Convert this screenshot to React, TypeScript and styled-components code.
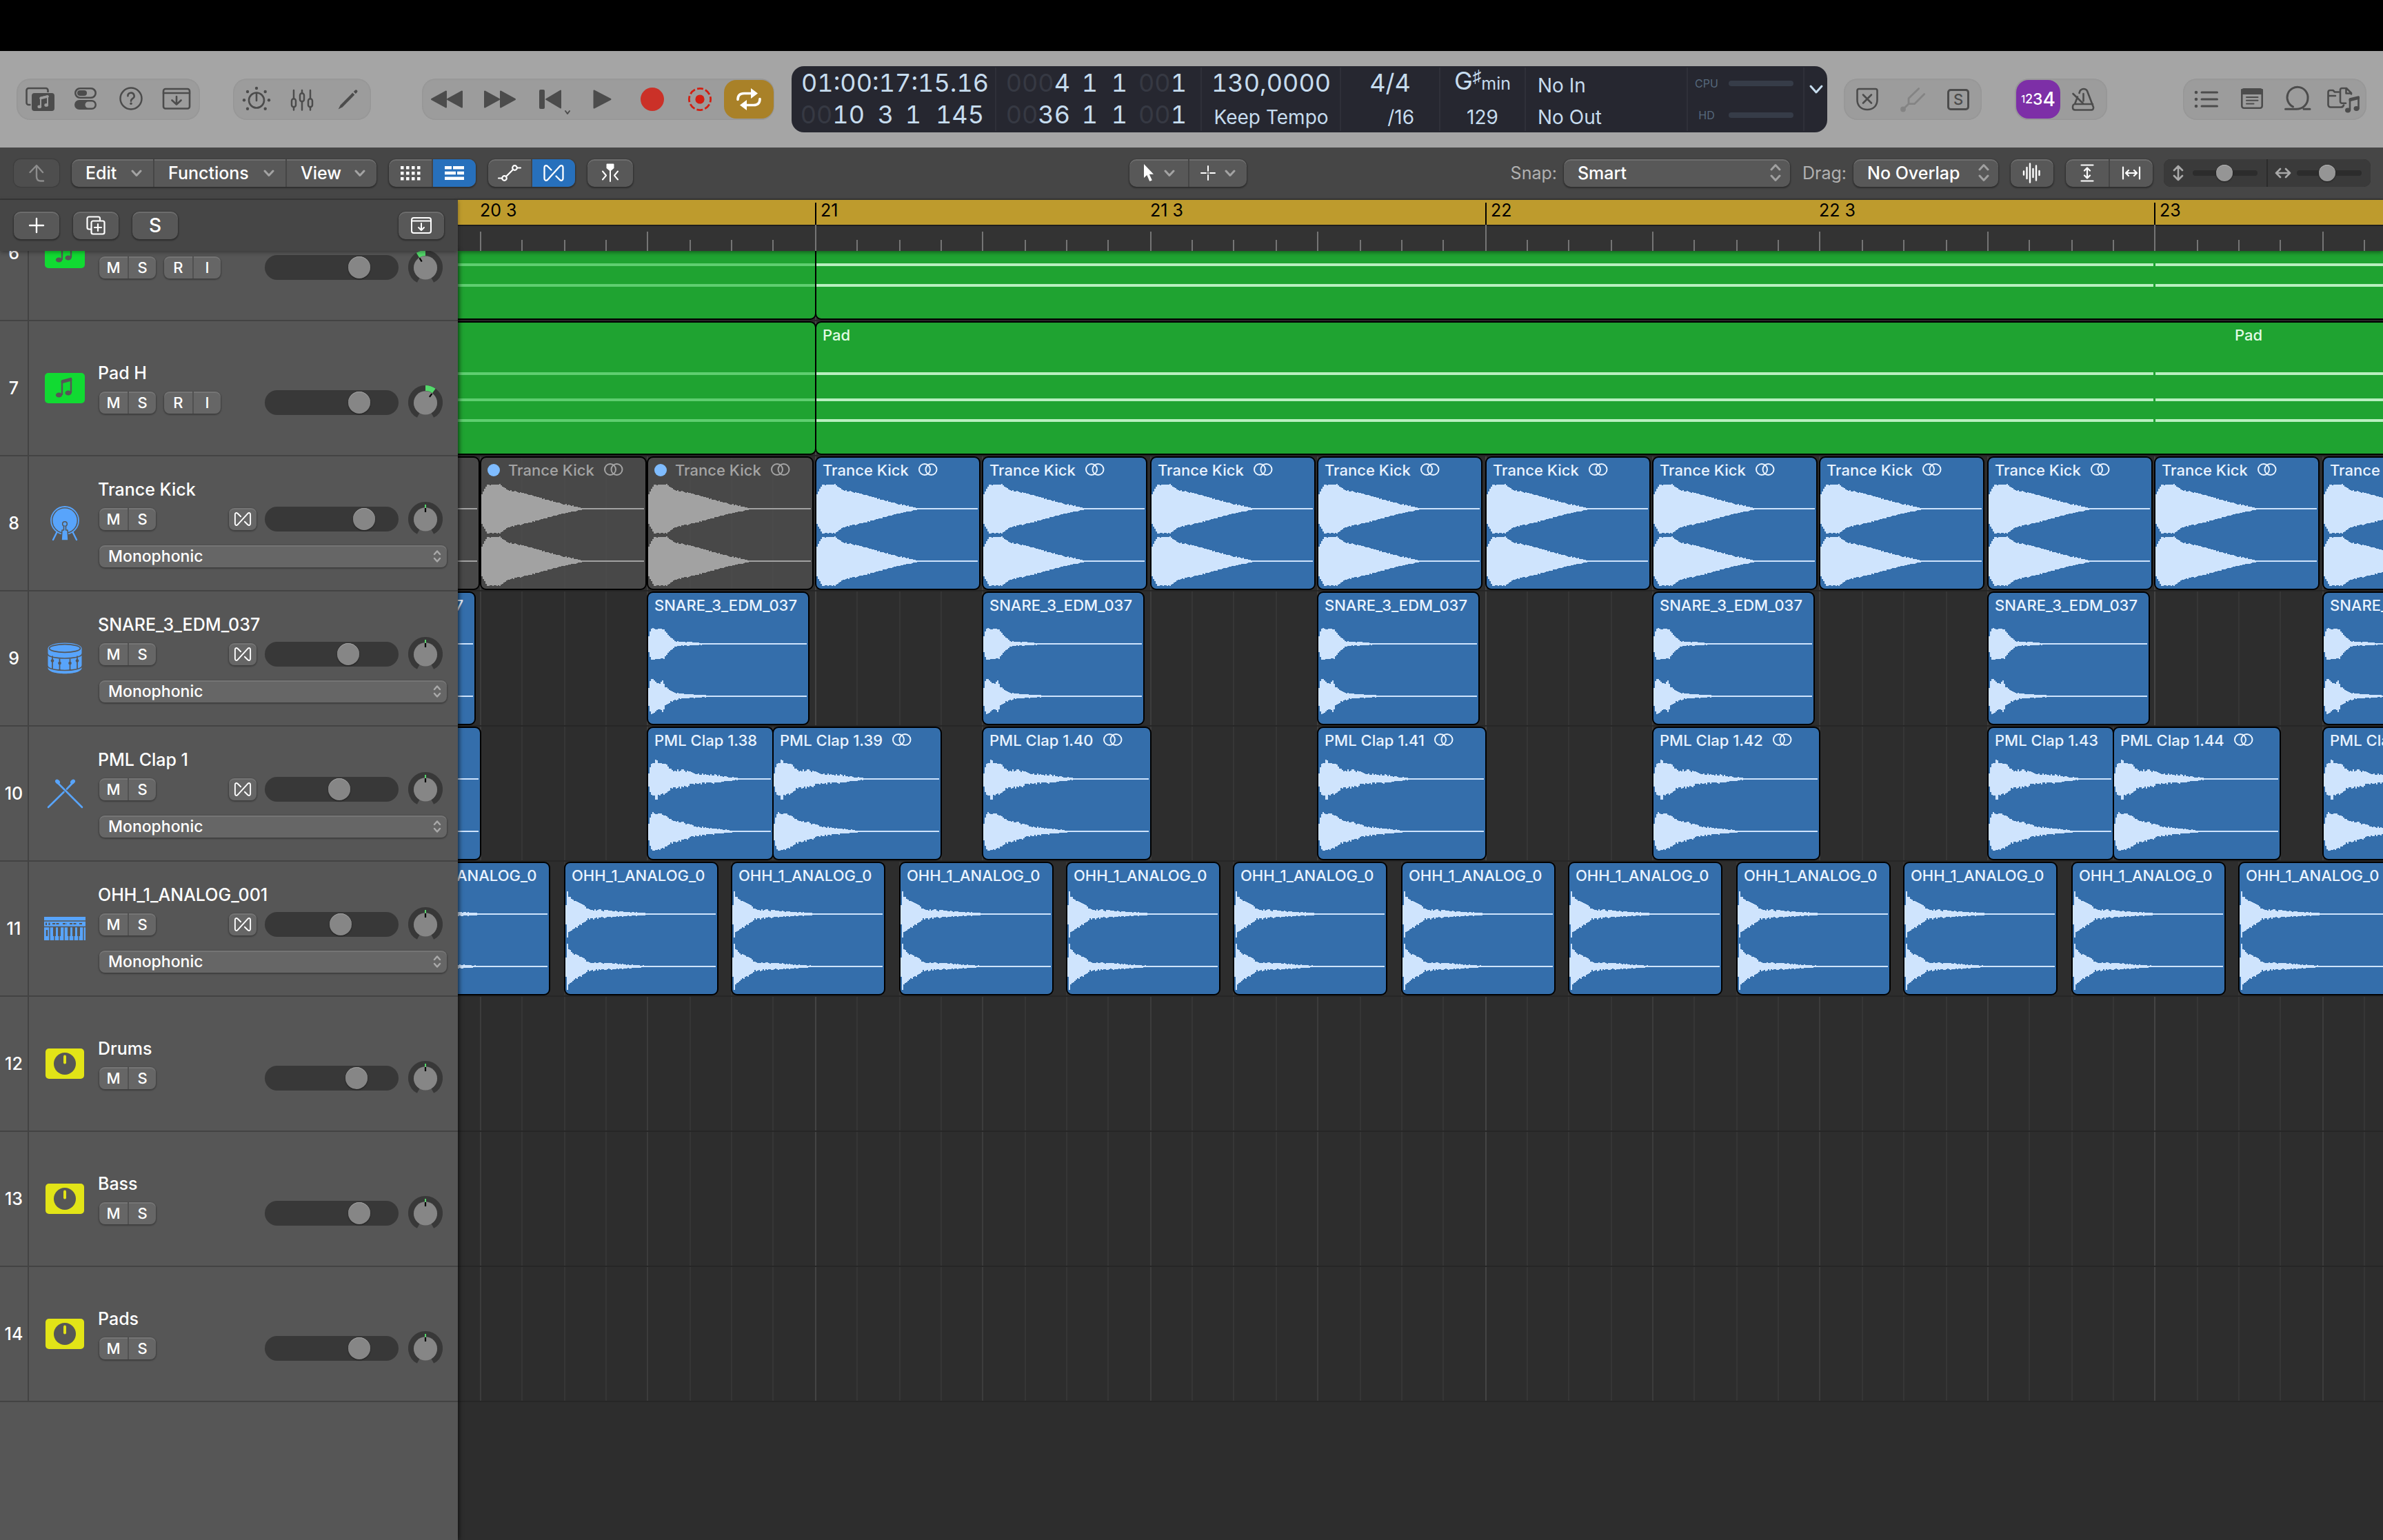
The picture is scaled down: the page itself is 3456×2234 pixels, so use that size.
import React from "react";
import styled, { createGlobalStyle, css } from "styled-components";

/* ---------- theme values ---------- */

const color = {
  header: "#a5a5a5",
  well: "#9c9c9c",
  glyph: "#4c4c4c",
  bar: "#464646",
  button: "#585858",
  sidebar: "#565656",
  rule: "#434343",
  control: "#666666",
  slot: "#383838",
  thumb: "#868686",
  blue: "#2770bc",
  gold: "#a98128",
  ruler: "#be9b2d",
  lcd: "#262730",
  lcdText: "#c6dcee",
  lcdDim: "#363943",
  canvas: "#2d2d2d",
  audio: "#346eab",
  audioWave: "#cfe4fd",
  midi: "#1fa331",
};

const text = { tiny: 16, label: 22, small: 23, body: 25, lcd: 28, digits: 36 };

const Global = createGlobalStyle`
  * { box-sizing: border-box; }
  html, body, #root { height: 100%; }
  body {
    margin: 0;
    background: #000;
    font-family: Inter, "Liberation Sans", sans-serif;
    font-size: ${text.body}px;
    color: #fff;
    overflow: hidden;
  }
  button, select, input { font: inherit; color: inherit; margin: 0; }
  svg { display: block; flex: none; }
`;

/* ---------- timeline scale ---------- */

const SIXTEENTH = 60.72;
const SCROLL = 0.34;
const BAR_21 = 518;
const at = (sixteenths: number) => BAR_21 + 2 * Math.round((sixteenths * SIXTEENTH - SCROLL) / 2);

/* ---------- page frame ---------- */

const Page = styled.div`
  display: flex;
  flex-direction: column;
  height: 100vh;
  padding-top: 74px;
  background: #000;
`;

const Header = styled.header`
  display: flex;
  align-items: center;
  flex: none;
  height: 140px;
  padding: 0 24px;
  background: ${color.header};
  color: ${color.glyph};
`;

const Well = styled.div<{ $width: number; $before?: string; $pad?: number }>`
  display: flex;
  align-items: center;
  justify-content: space-between;
  flex: none;
  width: ${(p) => p.$width}px;
  height: 60px;
  margin-left: ${(p) => p.$before ?? "0"};
  padding: 0 ${(p) => p.$pad ?? 12}px;
  border-radius: 20px;
  background: ${color.well};
  box-shadow: inset 0 0 3px rgba(0, 0, 0, 0.1);
`;

const IconButton = styled.button<{ $width?: number }>`
  display: flex;
  align-items: center;
  justify-content: center;
  flex: none;
  width: ${(p) => p.$width ?? 44}px;
  height: 56px;
  padding: 0;
  border: 0;
  background: none;
`;

const CycleButton = styled(IconButton)`
  border-radius: 18px;
  background: ${color.gold};
  color: #fff;
`;

const CountInButton = styled(IconButton)`
  border-radius: 18px;
  background: #7d2fa7;
  color: #fff;
  font-weight: 500;
`;

const CountDigit = styled.span<{ $size: number }>`
  font-size: ${(p) => p.$size}px;
  line-height: 30px;
`;

/* ---------- LCD ---------- */

const Lcd = styled.section`
  display: flex;
  flex: none;
  height: 96px;
  margin-left: 25px;
  padding: 2px 0;
  border-radius: 18px;
  background: ${color.lcd};
  color: ${color.lcdText};
`;

const LcdCell = styled.div<{ $width: number; $align?: string; $pad?: number }>`
  display: grid;
  grid-template-rows: 46px 46px;
  flex: none;
  width: ${(p) => p.$width}px;
  padding: 0 ${(p) => p.$pad ?? 14}px;
  justify-items: ${(p) => p.$align ?? "center"};
  border-right: 2px solid #2f3039;
  white-space: nowrap;
`;

const Digits = styled.div`
  font-size: ${text.digits}px;
  font-variant-numeric: tabular-nums;
  line-height: 44px;
`;

const LcdText = styled.div`
  padding-top: 6px;
  font-size: ${text.lcd}px;
  line-height: 40px;
`;

const Position = styled(Digits)<{ $cols: string }>`
  display: grid;
  grid-template-columns: ${(p) => p.$cols};
  justify-items: end;
`;

const Dim = styled.span`
  color: ${color.lcdDim};
`;

const Division = styled(LcdText)`
  justify-self: end;
  padding-right: 22px;
`;

const KeyName = styled(Digits)`
  display: flex;
  align-items: baseline;
  line-height: 38px;
`;

const KeySharp = styled.sup`
  align-self: flex-start;
  font-size: ${text.body}px;
  font-weight: 700;
  line-height: 24px;
`;

const KeyMode = styled.span`
  font-size: ${text.body}px;
`;

const Meter = styled.div`
  display: grid;
  grid-template-columns: 32px 94px;
  column-gap: 16px;
  align-items: center;
  justify-items: center;
  width: 142px;
  color: #56697d;
  font-size: ${text.tiny}px;
`;

const MeterBar = styled.span`
  width: 94px;
  height: 8px;
  border-radius: 4px;
  background: #363c48;
`;

/* ---------- toolbar ---------- */

const Toolbar = styled.nav`
  display: flex;
  align-items: center;
  flex: none;
  height: 76px;
  padding: 0 18px 0 20px;
  gap: 18px;
  background: ${color.bar};
  border-bottom: 2px solid #383838;
`;

const raised = css`
  background: ${color.button};
  box-shadow: inset 0 2px 0 rgba(255, 255, 255, 0.13), 0 1px 2px 1px rgba(0, 0, 0, 0.35);
`;

const Segments = styled.div<{ $faded?: boolean }>`
  display: flex;
  flex: none;
  height: 40px;
  border-radius: 10px;
  overflow: hidden;
  ${raised}
  ${(p) => p.$faded && "background: #4e4e4e; color: #8d8d8d; box-shadow: 0 0 1px 1px rgba(0,0,0,.15);"}
`;

const Segment = styled.button<{ $width: number; $on?: boolean; $menu?: boolean }>`
  display: flex;
  align-items: center;
  justify-content: ${(p) => (p.$menu ? "space-between" : "center")};
  width: ${(p) => p.$width}px;
  padding: ${(p) => (p.$menu ? "0 16px 0 20px" : "0")};
  border: 0;
  background: ${(p) => (p.$on ? color.blue : "none")};
  font-weight: 500;

  & + & {
    border-left: 2px solid ${color.bar};
  }
`;

const ToolSegment = styled(Segment)`
  justify-content: center;
  gap: 13px;
`;

const Spacer = styled.div<{ $grow: number }>`
  flex: ${(p) => p.$grow} 1 0;
  margin-right: -18px;
`;

const Field = styled.label`
  display: flex;
  align-items: center;
  flex: none;
  gap: 10px;
  color: #b0b0b0;
`;

const SelectBox = styled.span<{ $width?: number }>`
  display: grid;
  align-items: center;
  width: ${(p) => (p.$width ? p.$width + "px" : "100%")};

  & > * {
    grid-area: 1 / 1;
  }
  & > svg {
    justify-self: end;
    margin-right: 12px;
    pointer-events: none;
  }
`;

const Select = styled.select`
  appearance: none;
  width: 100%;
  height: 40px;
  padding: 0 36px 0 20px;
  border: 0;
  border-radius: 10px;
  color: #fff;
  font-weight: 500;
  ${raised}
`;

const ZoomPanel = styled.div`
  display: grid;
  grid-template-columns: 149px 149px;
  column-gap: 2px;
  flex: none;
  height: 40px;
  margin-left: -2px;
  border-radius: 10px;
  overflow: hidden;
  background: #2b2b2b;
`;

const ZoomLabel = styled.label`
  display: flex;
  align-items: center;
  justify-content: space-between;
  padding: 0 13px 0 10px;
  background: #3a3a3a;
  color: #a9a9a9;
`;

const ZoomSlider = styled.input`
  appearance: none;
  width: 94px;
  height: 8px;
  border-radius: 4px;
  background: #2c2c2c;

  &::-webkit-slider-thumb {
    appearance: none;
    width: 24px;
    height: 24px;
    border-radius: 50%;
    background: #959595;
    box-shadow: inset 0 1px 0 #b0b0b0, 0 1px 2px rgba(0, 0, 0, 0.5);
  }
`;

/* ---------- workspace ---------- */

const Workspace = styled.main`
  display: grid;
  grid-template-columns: 664px minmax(0, 1fr);
  grid-template-rows: 74px minmax(0, 1fr);
  flex: 1;
  min-height: 0;
  background: ${color.canvas};
`;

const TrackTools = styled.div`
  display: flex;
  align-items: center;
  gap: 20px;
  z-index: 3;
  padding: 0 20px;
  background: ${color.bar};
  box-shadow: 0 2px 6px rgba(0, 0, 0, 0.35);
`;

const TrackTool = styled.button<{ $end?: boolean }>`
  display: flex;
  align-items: center;
  justify-content: center;
  width: 66px;
  height: 40px;
  margin-left: ${(p) => (p.$end ? "auto" : "0")};
  padding: 0;
  border: 0;
  border-radius: 10px;
  font-size: ${text.lcd}px;
  font-weight: 500;
  ${raised}
`;

const Ruler = styled.div`
  position: relative;
  z-index: 1;
  overflow: hidden;
  background: #333;
  box-shadow: 0 2px 6px rgba(0, 0, 0, 0.45);
`;

const CycleStrip = styled.div`
  height: 38px;
  background: ${color.ruler};
  border-bottom: 2px solid #1e1e1e;
`;

const BarLabel = styled.span`
  position: absolute;
  top: 0;
  color: #000;
  line-height: 30px;
`;

const Overlay = styled.svg`
  position: absolute;
  inset: 0;
  width: 100%;
  height: 100%;
  pointer-events: none;
`;

const Sidebar = styled.div`
  z-index: 2;
  overflow: hidden;
  background: ${color.sidebar};
  box-shadow: 2px 0 6px rgba(0, 0, 0, 0.6);
`;

const Canvas = styled.div`
  overflow: hidden;
`;

const Scrolled = styled.div`
  position: relative;
  margin-top: -94px;
`;

const TrackRow = styled.section`
  display: grid;
  grid-template-columns: 42px 102px minmax(0, 1fr);
  align-items: center;
  height: 196px;
  padding-right: 16px;
  border-bottom: 2px solid ${color.rule};
`;

const TrackNumber = styled.div`
  display: flex;
  align-items: center;
  justify-content: center;
  align-self: stretch;
  border-right: 2px solid ${color.rule};
  font-weight: 500;
`;

const TrackIcon = styled.div`
  display: flex;
  justify-content: center;
  padding-left: 2px;
`;

const TrackBody = styled.div<{ $plain: boolean }>`
  display: flex;
  flex-direction: column;
  gap: 4px;
  padding-top: ${(p) => (p.$plain ? 10 : 0)}px;
`;

const TrackName = styled.div`
  height: 28px;
  margin-left: -2px;
  line-height: 28px;
  font-weight: 500;
`;

const TrackControls = styled.div`
  display: flex;
  align-items: center;
  gap: 12px;
  height: 50px;
  padding-right: 6px;
`;

const lifted = css`
  background: ${color.control};
  box-shadow: inset 0 2px 0 rgba(255, 255, 255, 0.1), 0 1px 2px 1px rgba(0, 0, 0, 0.28);
`;

const Pair = styled.div`
  display: grid;
  grid-template-columns: 41px 41px;
  height: 32px;
  border-radius: 8px;
  ${lifted}
`;

const PairButton = styled.button`
  padding: 0;
  border: 0;
  background: none;
  font-size: ${text.label}px;
  font-weight: 500;
  line-height: 32px;

  & + & {
    border-left: 2px solid #515151;
  }
`;

const FlexButton = styled.button`
  display: flex;
  align-items: center;
  justify-content: center;
  width: 40px;
  height: 32px;
  padding: 0;
  border: 0;
  border-radius: 8px;
  ${lifted}
`;

const VolumeGroup = styled.div`
  display: flex;
  align-items: center;
  gap: 12px;
  margin-left: auto;
`;

const Volume = styled.input`
  appearance: none;
  width: 194px;
  height: 36px;
  padding: 0 2px;
  border-radius: 18px;
  background: ${color.slot};

  &::-webkit-slider-thumb {
    appearance: none;
    width: 32px;
    height: 32px;
    border-radius: 50%;
    background: ${color.thumb};
    box-shadow: inset 0 1px 0 #a0a0a0, 0 1px 2px rgba(0, 0, 0, 0.5);
  }
`;

const PanLabel = styled.label`
  position: relative;
  width: 50px;
  height: 50px;
  margin-left: 2px;
`;

const PanInput = styled.input`
  position: absolute;
  inset: 0;
  width: 50px;
  height: 50px;
  opacity: 0;
`;

const ModeBox = styled(SelectBox)`
  margin-top: 9px;
  & > svg {
    margin-right: 7px;
  }
`;

const ModeSelect = styled.select`
  appearance: none;
  width: 100%;
  height: 32px;
  padding: 0 30px 0 13px;
  border: 0;
  border-radius: 8px;
  font-size: ${text.small}px;
  font-weight: 500;
  ${lifted}
`;

const Lane = styled.div`
  position: relative;
  height: 196px;
  border-bottom: 2px solid #262626;
`;

type Tone = "audio" | "muted" | "midi";

const fills: Record<Tone, string> = {
  audio: color.audio,
  muted: "rgba(78, 78, 78, 0.85)",
  midi: color.midi,
};

const RegionBox = styled.article<{ $tone: Tone }>`
  position: absolute;
  top: 0;
  display: flex;
  flex-direction: column;
  height: 194px;
  border: 2px solid #000;
  border-radius: 9px;
  overflow: hidden;
  background: ${(p) => fills[p.$tone]};
  color: ${(p) => (p.$tone === "muted" ? "#a4a4a4" : p.$tone === "midi" ? "#e2fbe4" : "#e9f3ff")};
`;

const RegionTitle = styled.div`
  display: flex;
  align-items: center;
  gap: 12px;
  flex: none;
  height: 36px;
  padding-left: 9px;
  font-size: ${text.label}px;
  font-weight: 500;
  white-space: nowrap;
`;

const MutedDot = styled.span`
  flex: none;
  width: 18px;
  height: 18px;
  border-radius: 50%;
  background: #7fbcff;
`;

const LoopTitle = styled(RegionTitle)`
  position: absolute;
  top: 0;
`;

const WaveSvg = styled.svg`
  width: calc(100% - 2px);
  height: 154px;
`;

const NoteSvg = styled.svg`
  width: 100%;
  height: 154px;
`;

/* ---------- icons ---------- */

type IconProps = { w?: number; h?: number; children: React.ReactNode; sw?: number };

const Icon = ({ w = 44, h = 44, sw = 3, children }: IconProps) => (
  <svg
    width={w}
    height={h}
    viewBox={`0 0 ${w} ${h}`}
    fill="none"
    stroke="currentColor"
    strokeWidth={sw}
    strokeLinecap="round"
    strokeLinejoin="round"
    aria-hidden="true"
  >
    {children}
  </svg>
);

const solid = { fill: "currentColor", stroke: "none" };

const LibraryIcon = () => (
  <Icon>
    <rect x="2.5" y="6" width="31" height="24" rx="3" strokeWidth="2.6" />
    <rect x="8.5" y="12" width="36" height="28" rx="5" fill={color.well} stroke="none" />
    <rect x="10" y="13" width="33" height="26" rx="4" {...solid} />
    <path d="M23 32.5V19.5l10-2.3v12.6" stroke={color.well} strokeWidth="2" />
    <path d="M23 20.5l10-2.5" stroke={color.well} strokeWidth="3.6" />
    <ellipse cx="21.3" cy="32.8" rx="2.9" ry="2.3" fill={color.well} stroke="none" />
    <ellipse cx="31.2" cy="30.4" rx="2.9" ry="2.3" fill={color.well} stroke="none" />
  </Icon>
);

const InspectorIcon = () => (
  <Icon>
    <rect x="7.3" y="6.3" width="29.4" height="13.4" rx="6.7" strokeWidth="2.6" />
    <rect x="10" y="9" width="14" height="8" rx="4" {...solid} />
    <rect x="6" y="23" width="32" height="14" rx="7" {...solid} />
    <rect x="21.5" y="25.5" width="14" height="9" rx="4.5" fill={color.well} stroke="none" />
  </Icon>
);

const HelpIcon = () => (
  <Icon>
    <circle cx="22" cy="21" r="15.5" strokeWidth="2.5" />
    <path d="M17.4 17.2a4.6 4.4 0 1 1 7 3.6c-1.6 1-2.4 1.8-2.4 3.8" strokeWidth="2.6" />
    <circle cx="22" cy="28.3" r="1.8" {...solid} />
  </Icon>
);

const DrawerIcon = ({ small = false }: { small?: boolean }) =>
  small ? (
    <Icon w={32} h={28} sw={2}>
      <rect x="2" y="3" width="28" height="22" rx="3" />
      <path d="M2 7.5h28M16 11v9.5M12 17l4 4 4-4" />
    </Icon>
  ) : (
    <Icon sw={2.6}>
      <rect x="3" y="7" width="38" height="28.5" rx="3" />
      <path d="M3 13h38M22 18v11M15.5 23.5L22 29.5l6.5-6" />
    </Icon>
  );

const SmartKnobIcon = () => (
  <Icon sw={2.6}>
    <circle cx="22" cy="23.5" r="11" />
    <path d="M22 13v11" />
    {[[4, 23.3], [9, 11], [22, 6], [34.7, 11], [40, 23.3], [9, 35.7], [34.7, 35.7]].map(([x, y]) => (
      <circle key={`${x}-${y}`} cx={x} cy={y} r="2.2" {...solid} />
    ))}
  </Icon>
);

const MixerIcon = () => (
  <Icon sw={2.5}>
    <path d="M10 9v11M10 34v3.5M22 9v4M22 26v11.5M34 9v11M34 34v3.5" />
    <rect x="7" y="21.2" width="6" height="12" rx="3" />
    <rect x="19" y="13.2" width="6" height="12" rx="3" />
    <rect x="31" y="21.2" width="6" height="12" rx="3" />
  </Icon>
);

const PencilIcon = () => (
  <Icon>
    <path d="M8.6 36.4l3.2-6.2L29.3 12.6l3 3L14.8 33.2z" {...solid} />
    <path d="M30.8 11.1l2-2a2.1 2.1 0 0 1 3 3l-2 2z" {...solid} />
  </Icon>
);

const tri = { fill: "currentColor", strokeWidth: 2 };

const RewindIcon = () => (
  <Icon w={48}>
    <path d="M23 10.5v23L2 22zM46 10.5v23L25 22z" {...tri} />
  </Icon>
);
const ForwardIcon = () => (
  <Icon w={48}>
    <path d="M25 10.5v23L46 22zM2 10.5v23L23 22z" {...tri} />
  </Icon>
);
const ToStartIcon = () => (
  <Icon w={54}>
    <rect x="9" y="8" width="8" height="28" rx="2" {...solid} />
    <path d="M40 9.5v25L19 22z" {...tri} />
    <path d="M47 39l3 4 3-4" strokeWidth="2" />
  </Icon>
);
const PlayIcon = () => (
  <Icon>
    <path d="M10.5 9.5v25L34.5 22z" {...tri} />
  </Icon>
);
const RecordIcon = () => (
  <Icon>
    <circle cx="22" cy="22" r="17" fill="#cb3128" stroke="none" />
  </Icon>
);
const CaptureIcon = () => (
  <Icon>
    <circle cx="22" cy="22" r="15.6" stroke="#d21f12" strokeWidth="2.8" strokeLinecap="butt" strokeDasharray="9 3.25" strokeDashoffset="4.5" />
    <circle cx="22" cy="22" r="6.6" fill="#d21f12" stroke="none" />
  </Icon>
);
const CycleIcon = () => (
  <Icon sw={3.6}>
    <path d="M6 22.5c0-6 3.5-9 9-9h12" />
    <path d="M25 6l10 7.5L25 21z" {...solid} />
    <path d="M38 21.5c0 6-3.5 9-9 9H17" />
    <path d="M19 23L9 30.5 19 38z" {...solid} />
  </Icon>
);

const ShieldIcon = () => (
  <Icon sw={2.6}>
    <path d="M10 7h24a2.5 2.5 0 0 1 2.5 2.5V23C36.5 32 30 37 22 37S7.5 32 7.5 23V9.5A2.5 2.5 0 0 1 10 7zM16 15.5l12 12M28 15.5l-12 12" />
  </Icon>
);
const TunerIcon = () => (
  <Icon sw={2.8}>
    <g stroke="#848484">
      <path d="M8 36.5L16 28.7V20.7L30.7 6.5M16 28.7H24.5L38.7 14.5" />
      <circle cx="8" cy="36.5" r="2.5" fill="#848484" />
    </g>
  </Icon>
);
const SoloBox = styled.span`
  display: flex;
  align-items: center;
  justify-content: center;
  width: 32px;
  height: 31px;
  border: 3px solid ${color.glyph};
  border-radius: 5px;
  font-size: ${text.label}px;
  font-weight: 500;
`;
const MetronomeIcon = () => (
  <Icon sw={2.6}>
    <path d="M22.5 29H10c-2 0-3 2-3 4.5S8.5 37.5 10.5 37.5h23.5c2 0 3.5-1.5 3-4L28 10c-2-4-8-4-10.5 0L16.5 13M14 18.5L10 29H36" />
    <path d="M7.5 14L22 28M22.5 14v10.5" />
  </Icon>
);
const ListIcon = () => (
  <Icon>
    {[12, 22, 32].map((y) => (
      <g key={y}>
        <circle cx="7" cy={y} r="2.3" {...solid} />
        <path d={`M15 ${y}h22.5`} />
      </g>
    ))}
  </Icon>
);
const NotesIcon = () => (
  <Icon sw={2.6}>
    <rect x="7.3" y="7.3" width="29.4" height="27.5" rx="3" />
    <path d="M7 8h30v6H7z" fill="currentColor" strokeWidth="2" />
    <path d="M14 19h16.5M14 23.7h16.5M14 28.4h10.5" strokeWidth="2" />
  </Icon>
);
const LoopIcon = () => (
  <Icon>
    <path d="M4.5 36.3H20C30 36.3 37 29 37 20.5a15 15 0 1 0-21.5 12.3M31 36.3h9" />
  </Icon>
);
const MediaIcon = () => (
  <Icon w={48} sw={2.6}>
    <path d="M18 11.5H12L9.5 9H5a2.5 2.5 0 0 0-2.5 2.5V30A3.5 3.5 0 0 0 6 33.5H21q3 0 4-3M2.5 17H13" />
    <path d="M28 27.7H22.5A2.5 2.5 0 0 1 20 25.2V8.5A2.5 2.5 0 0 1 22.5 6H29L36 13V14.5M28.5 7v6.5h7" />
    <path d="M34 38V21.5l12.5-3v17" strokeWidth="2.6" />
    <path d="M34.5 23l12-3" strokeWidth="4" />
    <ellipse cx="31" cy="38" rx="4" ry="3.4" {...solid} />
    <ellipse cx="43.5" cy="35.5" rx="4" ry="3.4" {...solid} />
  </Icon>
);

const Chevron = ({ tint = "#a3a3a3" }: { tint?: string }) => (
  <Icon w={16} h={12}>
    <path d="M2 3l6 6.5L14 3" stroke={tint} />
  </Icon>
);
const UpDown = ({ small = false }: { small?: boolean }) =>
  small ? (
    <Icon w={14} h={20} sw={2.5}>
      <path d="M3 7l4-4.5L11 7M3 13l4 4.5 4-4.5" stroke="#a9a9a9" />
    </Icon>
  ) : (
    <Icon w={18} h={28}>
      <path d="M3 9l6-6.5L15 9M3 18l6 6.5 6-6.5" stroke="#a0a0a0" />
    </Icon>
  );

const UpIcon = () => (
  <Icon w={30} h={30} sw={2.4}>
    <path d="M5.5 14L15 4l9 10M15 5v15c0 4 2 6.5 6 6.5h4" />
  </Icon>
);
const GridIcon = () => (
  <Icon w={32} h={24}>
    {[0, 1, 2, 3].flatMap((c) => [0, 1, 2].map((r) => <rect key={`${c}${r}`} x={2 + c * 8} y={2 + r * 8} width="4.5" height="4.5" {...solid} />))}
  </Icon>
);
const RowsIcon = () => (
  <Icon w={32} h={24}>
    <path d="M2 2h10v4.5H2zM14 2h16v4.5H14zM2 9.8h16v4.5H2zM20 9.8h10v4.5H20zM2 17.6h28v4.5H2z" {...solid} />
  </Icon>
);
const AutomationIcon = () => (
  <Icon w={36} h={26} sw={2.2}>
    <circle cx="10.5" cy="20.5" r="3.3" />
    <circle cx="25.5" cy="5.5" r="3.3" />
    <path d="M2 20.5h5M29 5.5h5M13 18L23 8" />
  </Icon>
);
const FlexIcon = ({ small = false }: { small?: boolean }) => (
  <svg width={small ? 28 : 34} height={small ? 22 : 26} viewBox="0 0 34 26" fill="none" stroke="currentColor" strokeWidth="2.3" strokeLinecap="round" strokeLinejoin="round" aria-hidden="true">
    <path d="M13.5 8.5L8 3C6 1.5 3.5 2 3.5 5v16c0 3 2.5 3.5 4.5 2L26 3c2-1.5 4.5-1 4.5 2v16c0 3-2.5 3.5-4.5 2l-5.5-5.5" />
  </svg>
);
const CatchIcon = () => (
  <Icon w={30} h={28} sw={2}>
    <path d="M10.5 1.5h9v5L16 9.5h-2L10.5 6.5z" fill="currentColor" />
    <path d="M15 9v17M4 11.5l5 6-5 6M26 11.5l-5 6 5 6" />
  </Icon>
);
const PointerIcon = () => (
  <Icon w={18} h={28}>
    <path d="M2 1v20l4.3-4 4 9 3.5-1.5-4-8.8H16z" {...solid} />
  </Icon>
);
const CrossIcon = () => (
  <Icon w={22} h={22} sw={2}>
    <path d="M11 1v7M11 14v7M1 11h7M14 11h7" />
    <circle cx="11" cy="11" r="1" {...solid} />
  </Icon>
);
const PulseIcon = () => (
  <Icon w={30} h={30} sw={2.4}>
    <path d="M3 12.5v5M7.5 7v16M12 1.5v27M16.5 9v12M21 4.5v21M25.5 12v6" />
  </Icon>
);
const FitTallIcon = () => (
  <Icon w={24} h={26} sw={2.2}>
    <path d="M3.5 1.5h17M3.5 24.5h17M12 6v14M8 9.5L12 5.5l4 4M8 16.5l4 4 4-4" />
  </Icon>
);
const FitWideIcon = () => (
  <Icon w={28} h={24} sw={2.2}>
    <path d="M2 3.5v17M26 3.5v17M6.5 12h15M10 8l-4 4 4 4M18 8l4 4-4 4" />
  </Icon>
);
const TallIcon = () => (
  <Icon w={22} h={24} sw={2.6}>
    <path d="M11 2v20M5 8l6-6 6 6M5 16l6 6 6-6" />
  </Icon>
);
const WideIcon = () => (
  <Icon w={24} h={22} sw={2.6}>
    <path d="M2 11h20M8 5l-6 6 6 6M16 5l6 6-6 6" />
  </Icon>
);
const PlusIcon = () => (
  <Icon w={26} h={26} sw={2.4}>
    <path d="M13 3v20M3 13h20" />
  </Icon>
);
const DuplicateIcon = () => (
  <Icon w={32} h={30} sw={2.2}>
    <path d="M9 20.5H6A2.5 2.5 0 0 1 3.5 18V5A2.5 2.5 0 0 1 6 2.5h13.5A2.5 2.5 0 0 1 22 5v2" />
    <rect x="9.5" y="8.5" width="19" height="19" rx="2.5" />
    <path d="M19 13v10M14 18h10" />
  </Icon>
);
const LoopRings = () => (
  <Icon w={32} h={20} sw={2}>
    <circle cx="11" cy="9" r="8" />
    <circle cx="20.5" cy="9" r="8" />
  </Icon>
);

const MidiTrackIcon = () => (
  <Icon w={58} h={44}>
    <rect width="58" height="44" rx="5" fill="#11da32" stroke="none" />
    <path d="M25 31V11.5l13-3.5v20" stroke={color.sidebar} strokeWidth="2.4" />
    <path d="M25.5 13l12-3.2" stroke={color.sidebar} strokeWidth="4" />
    <ellipse cx="20.5" cy="32" rx="4.6" ry="3.6" fill={color.sidebar} stroke="none" />
    <ellipse cx="34" cy="29" rx="4.6" ry="3.6" fill={color.sidebar} stroke="none" />
  </Icon>
);
const BusTrackIcon = () => (
  <Icon w={58} h={44}>
    <rect x="1" width="56" height="44" rx="5" fill="#e2e417" stroke="none" />
    <circle cx="29" cy="22" r="16" fill={color.sidebar} stroke="none" />
    <path d="M29 11.5v9" stroke="#e2e417" strokeWidth="4" />
  </Icon>
);
const KickTrackIcon = () => (
  <Icon w={60} h={56}>
    <g stroke="#58a4fb" fill="#58a4fb">
      <circle cx="30" cy="24" r="20" fill="none" strokeWidth="1.8" />
      <circle cx="30" cy="24" r="17.6" stroke="none" />
      <path d="M18.5 41L13 52M41.5 41L47 52" strokeWidth="2.4" />
      <circle cx="30" cy="29" r="3.3" stroke={color.sidebar} strokeWidth="1.5" />
      <path d="M28.5 32.5v5.5h-2.5l-1 15h10l-1-15h-2.5v-5.5" stroke={color.sidebar} strokeWidth="1.5" />
    </g>
  </Icon>
);
const SnareTrackIcon = () => (
  <Icon w={60} h={56}>
    <path d="M5.5 14v28c0 11 49 11 49 0V14z" fill="#58a4fb" stroke="none" />
    <ellipse cx="30" cy="13.5" rx="24.5" ry="8" fill="#58a4fb" stroke="none" />
    <g stroke={color.sidebar} strokeWidth="1.7">
      <ellipse cx="30" cy="13.5" rx="22.5" ry="5.8" />
      <path d="M5 22c3 8 47 8 50 0M5 39.5c3 8 47 8 50 0M12 25v18M22.5 28v17M37.5 28v17M48 25v18" />
    </g>
    <g fill={color.sidebar} stroke="none">
      <circle cx="12" cy="31.5" r="2.3" />
      <circle cx="22.5" cy="35" r="2.3" />
      <circle cx="37.5" cy="35" r="2.3" />
      <circle cx="48" cy="31.5" r="2.3" />
    </g>
  </Icon>
);
const SticksTrackIcon = () => (
  <Icon w={60} h={56}>
    <g stroke="#58a4fb" fill="#58a4fb">
      <path d="M19 12l36 36" strokeWidth="2.6" />
      <path d="M42 12L33 21.5M28.5 26L6 48" strokeWidth="2.6" />
      <ellipse cx="19.5" cy="11" rx="3.8" ry="3" transform="rotate(45 19.5 11)" stroke="none" />
      <ellipse cx="41.5" cy="11" rx="3.8" ry="3" transform="rotate(-45 41.5 11)" stroke="none" />
    </g>
  </Icon>
);
const KeysTrackIcon = () => (
  <Icon w={60} h={56}>
    <rect y="11" width="60" height="34" fill="#58a4fb" stroke="none" />
    <g stroke={color.sidebar} strokeLinecap="butt">
      <path d="M0 17h60M0 25.5h60" strokeWidth="1.5" />
      <path d="M3 19.5v3.5M7.5 19.5v3.5" strokeWidth="2" />
      <path d="M12 21h10M27 21h6M37 21h10M51 21h5" strokeWidth="1.8" strokeDasharray="4 1.5" />
      <path d="M4 30v9" strokeWidth="2.4" />
      <path d="M8 26v19M15 30v15M22 30v15M29 26v19M36 30v15M43 30v15M50 30v15M57 26v19" strokeWidth="1.4" />
      <path d="M15 26v13M22 26v13M36 26v13M43 26v13M50 26v13" strokeWidth="4" />
    </g>
  </Icon>
);

/* ---------- pan knob ---------- */

const polar = (r: number, deg: number) => {
  const a = ((deg - 90) * Math.PI) / 180;
  return `${(25 + r * Math.cos(a)).toFixed(2)} ${(25 + r * Math.sin(a)).toFixed(2)}`;
};

const Knob = ({ angle }: { angle: number }) => {
  const from = Math.min(0, angle);
  const to = Math.max(0, angle);
  return (
    <svg width="50" height="50" viewBox="0 0 50 50" fill="none" aria-hidden="true">
      <path d={`M${polar(21, -151)}A21 21 0 1 1 ${polar(21, 151)}`} stroke={color.slot} strokeWidth="8" />
      {angle === 0 ? (
        <path d="M25 4v5" stroke="#54d96b" strokeWidth="2" />
      ) : (
        <path d={`M${polar(21, from)}A21 21 0 0 1 ${polar(21, to)}`} stroke="#54d96b" strokeWidth="8" />
      )}
      <circle cx="25" cy="25.5" r="17" fill={color.thumb} />
      <path d={`M${polar(10, angle)}L${polar(16, angle)}`} stroke="#000" strokeWidth="2.2" />
    </svg>
  );
};

/* ---------- waveforms ---------- */

type Knots = [number, number][];
type Channel = { shape: Knots; rough: number };

const waves: Record<string, [Channel, Channel]> = {
  kick: [0, 1].map(() => ({
    shape: [[0, 22], [2, 26], [8, 36], [26, 36], [32, 32], [38, 28], [56, 24], [80, 18], [105, 11], [130, 5], [148, 1]] as Knots,
    rough: 1.6,
  })) as [Channel, Channel],
  snare: [
    { shape: [[0, 12], [3, 23], [22, 22], [26, 16], [32, 10], [40, 4], [58, 3], [84, 1]], rough: 1.6 },
    { shape: [[0, 14], [3, 27], [12, 21], [16, 19], [20, 24], [24, 14], [32, 9], [44, 5], [60, 3], [96, 1]], rough: 2 },
  ],
  clap: [
    { shape: [[0, 12], [3, 23], [9, 25], [11, 37], [13, 25], [24, 23], [34, 15], [52, 14], [68, 8], [96, 7], [114, 4], [132, 1]], rough: 4 },
    { shape: [[0, 14], [3, 25], [6, 28], [18, 27], [34, 18], [54, 13], [66, 8], [84, 6], [110, 3], [126, 1]], rough: 3 },
  ],
  hat: [
    { shape: [[0, 16], [2, 35], [4, 26], [12, 22], [22, 16], [32, 9], [48, 7], [66, 5], [100, 3], [130, 1]], rough: 3 },
    { shape: [[0, 16], [2, 35], [4, 26], [12, 20], [22, 15], [32, 8], [48, 6], [66, 5], [95, 3], [118, 1]], rough: 3 },
  ],
};

const level = (knots: Knots, x: number) => {
  for (let i = 1; i < knots.length; i++) {
    const [x0, a0] = knots[i - 1];
    const [x1, a1] = knots[i];
    if (x <= x1) return a0 + ((a1 - a0) * (x - x0)) / (x1 - x0);
  }
  return 1;
};

const noise = (n: number) => {
  const v = Math.sin(n * 12.9898) * 43758.5453;
  return v - Math.floor(v);
};

const channelPath = ({ shape, rough }: Channel, middle: number) => {
  let d = "";
  const end = shape[shape.length - 1][0];
  for (let x = 0; x < end; x += 2) {
    const base = level(shape, x);
    const dip = (seed: number) => Math.max(1, Math.round(base - noise(x + seed) * Math.min(rough, base * 0.35)));
    const up = dip(1);
    const down = dip(57);
    d += `M${x} ${middle - up}h2v${up + down}h-2z`;
  }
  return d + `M${end} ${middle - 1}h400v2h-400z`;
};

const wavePaths = Object.fromEntries(
  Object.entries(waves).map(([name, [left, right]]) => [name, channelPath(left, 38) + channelPath(right, 114)]),
);

/* ---------- regions ---------- */

type RegionData = { label: string; start: number; width: number; loop?: boolean; muted?: boolean };

const AudioRegion = ({ wave, label, start, width, loop, muted }: RegionData & { wave: string }) => (
  <RegionBox $tone={muted ? "muted" : "audio"} style={{ left: at(start), width }}>
    <RegionTitle>
      {muted && label && <MutedDot />}
      <span>{label}</span>
      {loop && <LoopRings />}
    </RegionTitle>
    <WaveSvg aria-hidden="true">
      <path d={wavePaths[wave]} fill={muted ? "#a2a2a2" : color.audioWave} shapeRendering="crispEdges" />
    </WaveSvg>
  </RegionBox>
);

const NOTE_ROWS = [36, 74, 104];

const PadLane = ({ label }: { label?: string }) => (
  <>
    <RegionBox $tone="midi" style={{ left: at(-16), width: at(0) - at(-16) + 2 }}>
      <RegionTitle />
      <NoteSvg aria-hidden="true">
        {NOTE_ROWS.map((y) => (
          <rect key={y} y={y} width="100%" height="4" fill="#5fce70" />
        ))}
      </NoteSvg>
    </RegionBox>
    <RegionBox $tone="midi" style={{ left: at(0), width: at(64) - at(0) }}>
      <RegionTitle>{label}</RegionTitle>
      {label && <LoopTitle style={{ left: at(34) - at(0) - 16 }}>{label}</LoopTitle>}
      <NoteSvg aria-hidden="true">
        {NOTE_ROWS.map((y) => (
          <g key={y} fill="#b9efc0">
            <rect y={y} width={at(32) - at(0) - 3} height="4" />
            <rect x={at(32) - at(0)} y={y} width="100%" height="4" />
          </g>
        ))}
      </NoteSvg>
    </RegionBox>
  </>
);

const steps = (from: number, count: number, every: number) => Array.from({ length: count }, (_, i) => from + i * every);

const kicks: RegionData[] = steps(-12, 14, 4).map((start) => ({
  label: start < -8 ? "" : "Trance Kick",
  start,
  width: start < 0 ? 242 : 240,
  loop: start >= -8,
  muted: start < 0,
}));

const snares: RegionData[] = steps(-12, 7, 8).map((start) => ({ label: "SNARE_3_EDM_037", start, width: 236 }));

const claps: RegionData[] = [
  { label: "", start: -12, width: 244 },
  { label: "PML Clap 1.38", start: -4, width: 184 },
  { label: "PML Clap 1.39", start: -1, width: 246, loop: true },
  { label: "PML Clap 1.40", start: 4, width: 246, loop: true },
  { label: "PML Clap 1.41", start: 12, width: 246, loop: true },
  { label: "PML Clap 1.42", start: 20, width: 244, loop: true },
  { label: "PML Clap 1.43", start: 28, width: 184 },
  { label: "PML Clap 1.44", start: 31, width: 244, loop: true },
  { label: "PML Clap 1.45", start: 36, width: 184 },
];

const hats: RegionData[] = steps(-10, 12, 4).map((start) => ({ label: "OHH_1_ANALOG_0", start, width: 224 }));

/* ---------- tracks ---------- */

type Track = {
  number: number;
  name?: string;
  icon: React.ReactNode;
  volume: number;
  pan?: number;
  record?: boolean;
  flex?: boolean;
  lane?: React.ReactNode;
};

const lane = (wave: string, regions: RegionData[]) => regions.map((r) => <AudioRegion key={r.start} wave={wave} {...r} />);

const tracks: Track[] = [
  { number: 6, icon: <MidiTrackIcon />, volume: 75, pan: -32, record: true, lane: <PadLane /> },
  { number: 7, name: "Pad H", icon: <MidiTrackIcon />, volume: 75, pan: 36, record: true, lane: <PadLane label="Pad" /> },
  { number: 8, name: "Trance Kick", icon: <KickTrackIcon />, volume: 80, flex: true, lane: lane("kick", kicks) },
  { number: 9, name: "SNARE_3_EDM_037", icon: <SnareTrackIcon />, volume: 65, flex: true, lane: lane("snare", snares) },
  { number: 10, name: "PML Clap 1", icon: <SticksTrackIcon />, volume: 57, flex: true, lane: lane("clap", claps) },
  { number: 11, name: "OHH_1_ANALOG_001", icon: <KeysTrackIcon />, volume: 58, flex: true, lane: lane("hat", hats) },
  { number: 12, name: "Drums", icon: <BusTrackIcon />, volume: 73 },
  { number: 13, name: "Bass", icon: <BusTrackIcon />, volume: 75 },
  { number: 14, name: "Pads", icon: <BusTrackIcon />, volume: 75 },
];

const TrackHeader = ({ track }: { track: Track }) => (
  <TrackRow>
    <TrackNumber>{track.number}</TrackNumber>
    <TrackIcon>{track.icon}</TrackIcon>
    <TrackBody $plain={!track.flex}>
      <TrackName>{track.name}</TrackName>
      <TrackControls>
        <Pair>
          <PairButton>M</PairButton>
          <PairButton>S</PairButton>
        </Pair>
        {track.record && (
          <Pair>
            <PairButton>R</PairButton>
            <PairButton>I</PairButton>
          </Pair>
        )}
        <VolumeGroup>
          {track.flex && (
            <FlexButton aria-label="Flex">
              <FlexIcon small />
            </FlexButton>
          )}
          <Volume type="range" aria-label={`Track ${track.number} volume`} defaultValue={track.volume} />
          <PanLabel>
            <Knob angle={track.pan ?? 0} />
            <PanInput type="range" aria-label={`Track ${track.number} pan`} min={-150} max={150} defaultValue={track.pan ?? 0} />
          </PanLabel>
        </VolumeGroup>
      </TrackControls>
      {track.flex && (
        <ModeBox>
          <ModeSelect aria-label={`Track ${track.number} flex mode`} defaultValue="Monophonic">
            <option>Monophonic</option>
          </ModeSelect>
          <UpDown small />
        </ModeBox>
      )}
    </TrackBody>
  </TrackRow>
);

/* ---------- ruler and grid ---------- */

const ticks = steps(-8, 96, 1);

const RulerTicks = () => (
  <Overlay aria-hidden="true">
    {ticks.map((n) => {
      const bar = n % 16 === 0;
      const top = bar ? 36 : n % 4 === 0 ? 46 : 58;
      return (
        <g key={n}>
          {bar && <rect x={at(n)} y="4" width="2" height="32" fill="#000" />}
          <rect x={at(n)} y={top} width="2" height={74 - top} fill="#757575" />
        </g>
      );
    })}
  </Overlay>
);

const GridLines = () => (
  <Overlay aria-hidden="true">
    {ticks.map((n) => (
      <rect key={n} x={at(n)} width="2" height="100%" fill={n % 16 === 0 ? "#444" : n % 4 === 0 ? "#3c3c3c" : "#363636"} />
    ))}
  </Overlay>
);

const barLabels = [
  { text: "20 3", start: -8, inset: 0 },
  { text: "21", start: 0, inset: 8 },
  { text: "21 3", start: 8, inset: 0 },
  { text: "22", start: 16, inset: 8 },
  { text: "22 3", start: 24, inset: 0 },
  { text: "23", start: 32, inset: 8 },
];

/* ---------- header pieces ---------- */

const Display = () => (
  <Lcd aria-label="Position display">
    <LcdCell $width={297} $align="start">
      <Digits>01:00:17:15.16</Digits>
      <Position $cols="92px 42px 40px 91px">
        <span><Dim>00</Dim>10</span>
        <span>3</span>
        <span>1</span>
        <span>145</span>
      </Position>
    </LcdCell>
    <LcdCell $width={298} $align="start">
      <Position $cols="93px 40px 43px 86px">
        <span><Dim>000</Dim>4</span>
        <span>1</span>
        <span>1</span>
        <span><Dim>00</Dim>1</span>
      </Position>
      <Position $cols="93px 40px 43px 86px">
        <span><Dim>00</Dim>36</span>
        <span>1</span>
        <span>1</span>
        <span><Dim>00</Dim>1</span>
      </Position>
    </LcdCell>
    <LcdCell $width={202}>
      <Digits>130,0000</Digits>
      <LcdText>Keep Tempo</LcdText>
    </LcdCell>
    <LcdCell $width={144}>
      <Digits>4/4</Digits>
      <Division>/16</Division>
    </LcdCell>
    <LcdCell $width={124}>
      <KeyName>
        G<KeySharp>♯</KeySharp><KeyMode>min</KeyMode>
      </KeyName>
      <LcdText>129</LcdText>
    </LcdCell>
    <LcdCell $width={235} $align="start" $pad={17}>
      <LcdText>No In</LcdText>
      <LcdText>No Out</LcdText>
    </LcdCell>
    <LcdCell $width={169} $align="start" $pad={11}>
      <Meter>CPU<MeterBar /></Meter>
      <Meter>HD<MeterBar /></Meter>
    </LcdCell>
    <IconButton $width={33} aria-label="Display mode">
      <Icon w={22} h={60}>
        <path d="M3 29l8 9 8-9" stroke={color.lcdText} />
      </Icon>
    </IconButton>
  </Lcd>
);

export default function App() {
  return (
    <Page>
      <Global />
      <Header>
        <Well $width={266}>
          <IconButton aria-label="Library"><LibraryIcon /></IconButton>
          <IconButton aria-label="Inspector"><InspectorIcon /></IconButton>
          <IconButton aria-label="Quick help"><HelpIcon /></IconButton>
          <IconButton aria-label="Toolbar"><DrawerIcon /></IconButton>
        </Well>
        <Well $width={200} $before="48px">
          <IconButton aria-label="Smart controls"><SmartKnobIcon /></IconButton>
          <IconButton aria-label="Mixer"><MixerIcon /></IconButton>
          <IconButton aria-label="Editors"><PencilIcon /></IconButton>
        </Well>
        <Well $width={511} $before="74px" $pad={1}>
          <IconButton $width={70} aria-label="Rewind"><RewindIcon /></IconButton>
          <IconButton $width={84} aria-label="Forward"><ForwardIcon /></IconButton>
          <IconButton $width={66} aria-label="Go to beginning"><ToStartIcon /></IconButton>
          <IconButton $width={80} aria-label="Play"><PlayIcon /></IconButton>
          <IconButton $width={66} aria-label="Record"><RecordIcon /></IconButton>
          <IconButton $width={71} aria-label="Capture recording"><CaptureIcon /></IconButton>
          <CycleButton $width={72} aria-label="Cycle"><CycleIcon /></CycleButton>
        </Well>
        <Display />
        <Well $width={200} $before="24px">
          <IconButton aria-label="Low latency"><ShieldIcon /></IconButton>
          <IconButton aria-label="Tuner"><TunerIcon /></IconButton>
          <IconButton aria-label="Solo"><SoloBox>S</SoloBox></IconButton>
        </Well>
        <Well $width={134} $before="48px" $pad={2}>
          <CountInButton $width={64} aria-label="Count in">
            {[14, 18, 23, 28].map((size, i) => (
              <CountDigit key={size} $size={size}>{i + 1}</CountDigit>
            ))}
          </CountInButton>
          <IconButton $width={66} aria-label="Metronome"><MetronomeIcon /></IconButton>
        </Well>
        <Well $width={266} $before="auto">
          <IconButton aria-label="List editors"><ListIcon /></IconButton>
          <IconButton aria-label="Note pads"><NotesIcon /></IconButton>
          <IconButton aria-label="Loop browser"><LoopIcon /></IconButton>
          <IconButton aria-label="Browsers"><MediaIcon /></IconButton>
        </Well>
      </Header>

      <Toolbar>
        <Segments $faded>
          <Segment $width={66} aria-label="Up one level"><UpIcon /></Segment>
        </Segments>
        <Segments>
          <Segment $width={118} $menu>Edit<Chevron /></Segment>
          <Segment $width={192} $menu>Functions<Chevron /></Segment>
          <Segment $width={132} $menu>View<Chevron /></Segment>
        </Segments>
        <Segments>
          <Segment $width={62} aria-label="Live loops"><GridIcon /></Segment>
          <Segment $width={64} $on aria-label="Tracks view"><RowsIcon /></Segment>
        </Segments>
        <Segments>
          <Segment $width={62} aria-label="Automation"><AutomationIcon /></Segment>
          <Segment $width={64} $on aria-label="Flex view"><FlexIcon /></Segment>
        </Segments>
        <Segments>
          <Segment $width={66} aria-label="Catch playhead"><CatchIcon /></Segment>
        </Segments>
        <Spacer $grow={27} />
        <Segments>
          <ToolSegment $width={85} aria-label="Pointer tool"><PointerIcon /><Chevron /></ToolSegment>
          <ToolSegment $width={85} aria-label="Marquee tool"><CrossIcon /><Chevron /></ToolSegment>
        </Segments>
        <Spacer $grow={14} />
        <Field>
          Snap:
          <SelectBox $width={328}>
            <Select defaultValue="Smart"><option>Smart</option></Select>
            <UpDown />
          </SelectBox>
        </Field>
        <Field>
          Drag:
          <SelectBox $width={210}>
            <Select defaultValue="No Overlap"><option>No Overlap</option></Select>
            <UpDown />
          </SelectBox>
        </Field>
        <Segments>
          <Segment $width={62} aria-label="Waveform zoom"><PulseIcon /></Segment>
        </Segments>
        <Segments>
          <Segment $width={62} aria-label="Fit vertically"><FitTallIcon /></Segment>
          <Segment $width={64} aria-label="Fit horizontally"><FitWideIcon /></Segment>
        </Segments>
        <ZoomPanel>
          <ZoomLabel>
            <TallIcon />
            <ZoomSlider type="range" aria-label="Vertical zoom" defaultValue={48} />
          </ZoomLabel>
          <ZoomLabel>
            <WideIcon />
            <ZoomSlider type="range" aria-label="Horizontal zoom" defaultValue={45} />
          </ZoomLabel>
        </ZoomPanel>
      </Toolbar>

      <Workspace>
        <TrackTools>
          <TrackTool aria-label="Add track"><PlusIcon /></TrackTool>
          <TrackTool aria-label="Duplicate track"><DuplicateIcon /></TrackTool>
          <TrackTool>S</TrackTool>
          <TrackTool $end aria-label="Track header options"><DrawerIcon small /></TrackTool>
        </TrackTools>
        <Ruler>
          <CycleStrip />
          <RulerTicks />
          {barLabels.map((b) => (
            <BarLabel key={b.text} style={{ left: at(b.start) + b.inset }}>{b.text}</BarLabel>
          ))}
        </Ruler>
        <Sidebar>
          <Scrolled>
            {tracks.map((t) => (
              <TrackHeader key={t.number} track={t} />
            ))}
          </Scrolled>
        </Sidebar>
        <Canvas>
          <Scrolled>
            <GridLines />
            {tracks.map((t) => (
              <Lane key={t.number}>{t.lane}</Lane>
            ))}
          </Scrolled>
        </Canvas>
      </Workspace>
    </Page>
  );
}
